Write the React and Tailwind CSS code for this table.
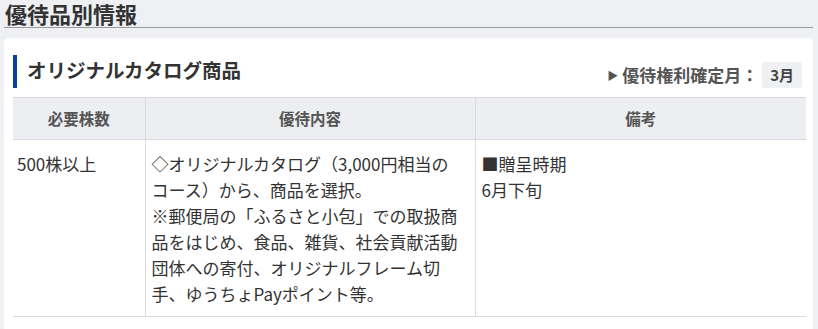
import React from "react";

function App() {
  return (
    <div
      className="w-[818px] h-[329px] overflow-hidden bg-[#eef0f3] text-[#333]"
      style={{ fontFamily: '"Noto Sans CJK JP", "Noto Sans", sans-serif' }}
    >
      <div className="pl-[4px] pr-[5px]">
        <h2 className="text-[22px] font-bold leading-[27px] pl-[1px] border-b border-[#9a9a9a]">
          優待品別情報
        </h2>
        <div className="mt-[10px] bg-white rounded-[4px] pt-[17px] pl-[9px] pr-[7px]">
          <div className="flex justify-between items-end mb-[9px]">
            <h3 className="border-l-[4px] border-[#0b3f9b] pl-[10px] text-[19.5px] font-bold leading-[30px] h-[33px]">
              オリジナルカタログ商品
            </h3>
            <div className="flex items-center gap-[4px] pr-[4px]">
              <span className="text-[11px] text-[#555] mt-[1px]">▶</span>
              <span className="text-[17px] font-bold text-[#555]">優待権利確定月：</span>
              <span className="bg-[#eef0f4] rounded-[3px] px-[8px] h-[26px] leading-[26px] text-[15px] font-bold text-[#444]">
                3月
              </span>
            </div>
          </div>
          <table className="w-full border-collapse table-fixed">
            <colgroup>
              <col className="w-[132px]" />
              <col className="w-[330px]" />
              <col />
            </colgroup>
            <thead>
              <tr className="bg-[#eceef2] border-t border-b border-[#d9d9dc] h-[42px] text-[15.5px] font-bold text-[#555]">
                <th className="font-bold">必要株数</th>
                <th className="font-bold border-l border-[#d9d9dc]">優待内容</th>
                <th className="font-bold border-l border-[#d9d9dc]">備考</th>
              </tr>
            </thead>
            <tbody>
              <tr className="border-b border-[#dcdcdc] text-[17px] leading-[26px] align-top">
                <td className="pl-[4px] pt-[11px] pb-[9px]">500株以上</td>
                <td className="border-l border-[#dcdcdc] pl-[6px] pr-[4px] pt-[11px] pb-[9px]">
                  ◇オリジナルカタログ（3,000円相当の
                  <br />
                  コース）から、商品を選択。
                  <br />
                  ※郵便局の「ふるさと小包」での取扱商
                  <br />
                  品をはじめ、食品、雑貨、社会貢献活動
                  <br />
                  団体への寄付、オリジナルフレーム切
                  <br />
                  手、ゆうちょPayポイント等。
                </td>
                <td className="border-l border-[#dcdcdc] pl-[6px] pt-[11px] pb-[9px]">
                  ■贈呈時期
                  <br />
                  6月下旬
                </td>
              </tr>
            </tbody>
          </table>
          <div className="h-[14px]" />
        </div>
      </div>
    </div>
  );
}

export default App;
